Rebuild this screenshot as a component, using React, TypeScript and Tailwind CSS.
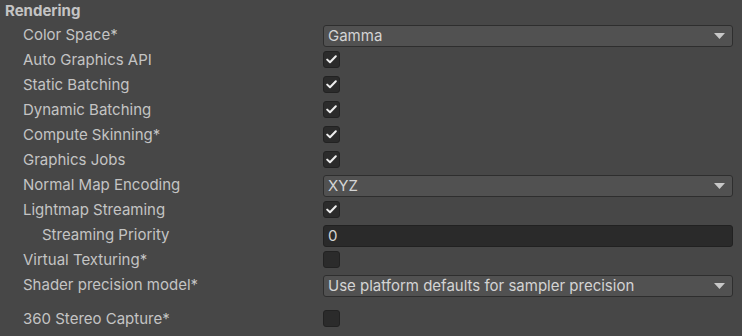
import React from 'react';

type Field =
  | { kind: 'dropdown'; value: string }
  | { kind: 'check'; checked: boolean }
  | { kind: 'text'; value: string };

interface Row {
  label: string;
  indent?: boolean;
  field: Field;
  spaced?: boolean;
}

const rows: Row[] = [
  { label: 'Color Space*', field: { kind: 'dropdown', value: 'Gamma' } },
  { label: 'Auto Graphics API', field: { kind: 'check', checked: true } },
  { label: 'Static Batching', field: { kind: 'check', checked: true } },
  { label: 'Dynamic Batching', field: { kind: 'check', checked: true } },
  { label: 'Compute Skinning*', field: { kind: 'check', checked: true } },
  { label: 'Graphics Jobs', field: { kind: 'check', checked: true } },
  { label: 'Normal Map Encoding', field: { kind: 'dropdown', value: 'XYZ' } },
  { label: 'Lightmap Streaming', field: { kind: 'check', checked: true } },
  { label: 'Streaming Priority', indent: true, field: { kind: 'text', value: '0' } },
  { label: 'Virtual Texturing*', field: { kind: 'check', checked: false } },
  { label: 'Shader precision model*', field: { kind: 'dropdown', value: 'Use platform defaults for sampler precision' } },
  { label: '360 Stereo Capture*', spaced: true, field: { kind: 'check', checked: false } },
];

const Dropdown = ({ value }: { value: string }) => (
  <div className="flex h-[22px] flex-1 items-center justify-between rounded-[3px] border border-[#2e2e2e] bg-[#515151] pl-[4px] pr-[7px] text-[#d4d4d4]">
    <span className="leading-none">{value}</span>
    <svg width="11" height="6" viewBox="0 0 11 6">
      <path d="M0 0 H11 L5.5 6 Z" fill="#c8c8c8" />
    </svg>
  </div>
);

const Checkbox = ({ checked }: { checked: boolean }) => (
  <div className="mb-[3px] flex h-[17px] w-[17px] items-center justify-center rounded-[3px] border border-[#222] bg-[#2b2b2b]">
    {checked && (
      <svg width="11" height="9" viewBox="0 0 11 9">
        <path d="M1.2 4.6 L4 7.3 L9.8 1.3" fill="none" stroke="#eeeeee" strokeWidth="2" strokeLinecap="round" strokeLinejoin="round" />
      </svg>
    )}
  </div>
);

const TextField = ({ value }: { value: string }) => (
  <div className="flex h-[22px] flex-1 items-center rounded-[3px] border border-[#212121] bg-[#2a2a2a] pl-[4px] text-[#d4d4d4]">
    <span className="leading-none">{value}</span>
  </div>
);

export default function App() {
  return (
    <div
      className="h-[336px] w-[742px] overflow-hidden bg-[#474747] text-[15px] text-[#c4c4c4]"
      style={{ fontFamily: 'Inter, "Noto Sans", sans-serif' }}
    >
      <div className="flex h-[23px] items-center pl-[5px] font-bold">Rendering</div>
      {rows.map((r) => (
        <div key={r.label} className={`flex h-[25px] items-center pr-[9px] ${r.spaced ? 'mt-[9px]' : ''}`}>
          <div className={`w-[323px] shrink-0 ${r.indent ? 'pl-[42px]' : 'pl-[23px]'}`}>{r.label}</div>
          {r.field.kind === 'dropdown' && <Dropdown value={r.field.value} />}
          {r.field.kind === 'check' && <Checkbox checked={r.field.checked} />}
          {r.field.kind === 'text' && <TextField value={r.field.value} />}
        </div>
      ))}
    </div>
  );
}
